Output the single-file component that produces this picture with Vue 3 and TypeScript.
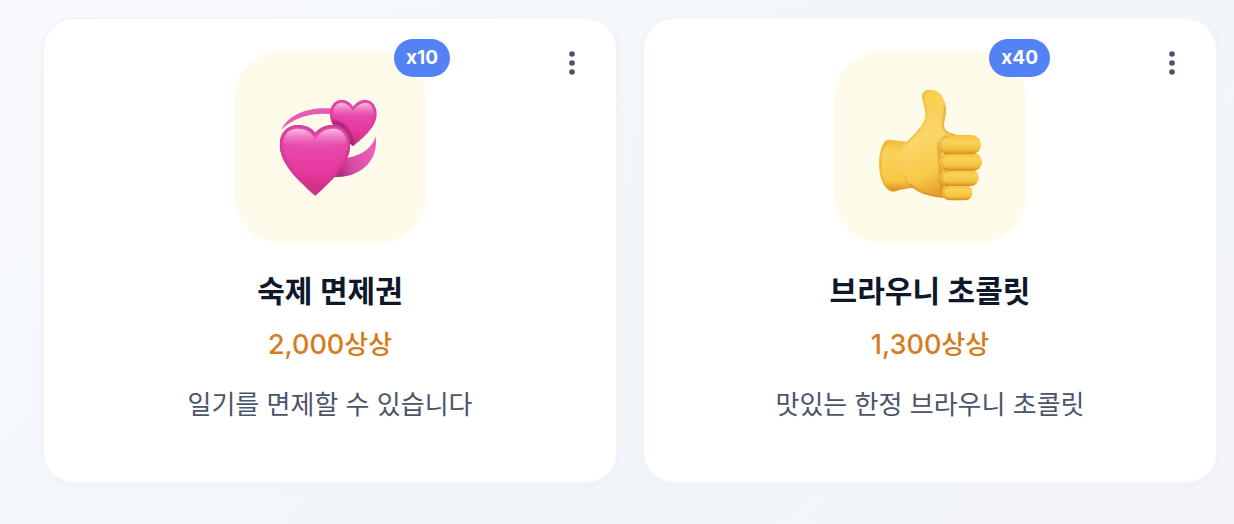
<script setup lang="ts">
interface Reward {
  id: string
  icon: 'hearts' | 'thumb'
  count: number
  title: string
  price: string
  unit: string
  description: string
}

const rewards: Reward[] = [
  {
    id: 'homework-pass',
    icon: 'hearts',
    count: 10,
    title: '숙제 면제권',
    price: '2,000',
    unit: '상상',
    description: '일기를 면제할 수 있습니다',
  },
  {
    id: 'brownie',
    icon: 'thumb',
    count: 40,
    title: '브라우니 초콜릿',
    price: '1,300',
    unit: '상상',
    description: '맛있는 한정 브라우니 초콜릿',
  },
]
</script>

<template>
  <main class="shop">
    <article v-for="reward in rewards" :key="reward.id" class="card">
      <button class="menu" type="button" :aria-label="`${reward.title} 메뉴`">
        <svg width="24" height="24" viewBox="0 0 24 24" aria-hidden="true">
          <circle cx="12" cy="3" r="2.8" />
          <circle cx="12" cy="12" r="2.8" />
          <circle cx="12" cy="21" r="2.8" />
        </svg>
      </button>

      <div class="tile">
        <svg v-if="reward.icon === 'hearts'" width="120" height="116" viewBox="0 -3 360 348" aria-hidden="true">
          <defs>
            <linearGradient id="heart-body" x1="0" y1="0" x2="0" y2="1">
              <stop offset="0" stop-color="#ec61b9" />
              <stop offset="0.3" stop-color="#e748ac" />
              <stop offset="0.65" stop-color="#e8389f" />
              <stop offset="1" stop-color="#c42c79" />
            </linearGradient>
            <linearGradient id="heart-shine" x1="0" y1="0" x2="0" y2="1">
              <stop offset="0" stop-color="#fbc4e4" stop-opacity="0.95" />
              <stop offset="1" stop-color="#ef6bbd" stop-opacity="0" />
            </linearGradient>
            <linearGradient id="ribbon-low" gradientUnits="userSpaceOnUse" x1="200" y1="235" x2="310" y2="190">
              <stop offset="0" stop-color="#a92d78" />
              <stop offset="0.4" stop-color="#db4ba5" />
              <stop offset="1" stop-color="#ea60b8" />
            </linearGradient>
            <filter id="heart-soft" x="-20%" y="-20%" width="140%" height="140%">
              <feGaussianBlur stdDeviation="5" />
            </filter>
            <clipPath id="small-heart-clip">
              <path d="M249 50C239 35 226 30 214 30C195 30 180 48 180 72C180 109 219 144 249 168C280 144 320 109 320 72C320 48 305 30 286 30C272 30 259 38 249 50Z" />
            </clipPath>
            <clipPath id="big-heart-clip">
              <path d="M136 128C122 111 104 105 84 105C53 105 29 128 29 163C29 221 87 275 136 317C184 275 241 221 241 163C241 128 217 105 188 105C167 105 149 113 136 128Z" />
            </clipPath>
          </defs>
          <path d="M33 120C57 71 119 49 190 56L187 73C128 66 75 80 33 120Z" fill="#e65bb3" />
          <path d="M316 138C330 208 270 269 188 260L214 205C263 203 308 178 316 138Z" fill="url(#ribbon-low)" />
          <g clip-path="url(#small-heart-clip)">
            <rect x="178" y="29" width="144" height="142" fill="url(#heart-body)" />
            <path d="M249 50C239 35 226 30 214 30C195 30 180 48 180 72C180 109 219 144 249 168C280 144 320 109 320 72C320 48 305 30 286 30C272 30 259 38 249 50Z" fill="none" stroke="#d93a9c" stroke-width="10" filter="url(#heart-soft)" />
            <path d="M190 72C190 50 201 39 214 39C229 39 241 49 249 64C259 47 272 39 287 39C302 39 311 51 311 72C296 84 204 84 190 72Z" fill="url(#heart-shine)" />
            <path d="M182 98C210 95 236 115 249 170" fill="none" stroke="#a5246f" stroke-width="14" filter="url(#heart-soft)" />
          </g>
          <g clip-path="url(#big-heart-clip)">
            <rect x="28" y="103" width="214" height="217" fill="url(#heart-body)" />
            <path d="M136 128C122 111 104 105 84 105C53 105 29 128 29 163C29 221 87 275 136 317C184 275 241 221 241 163C241 128 217 105 188 105C167 105 149 113 136 128Z" fill="none" stroke="#d0348f" stroke-width="13" filter="url(#heart-soft)" />
            <path d="M40 160C40 130 59 116 83 116C107 116 124 127 136 148C149 127 166 116 189 116C214 116 230 134 230 160C213 178 57 178 40 160Z" fill="url(#heart-shine)" />
          </g>
        </svg>

        <svg v-else width="120" height="130" viewBox="0 4 360 390" aria-hidden="true">
          <defs>
            <linearGradient id="hand-skin" x1="0" y1="0" x2="0.25" y2="1">
              <stop offset="0" stop-color="#f8cd45" />
              <stop offset="0.5" stop-color="#fad568" />
              <stop offset="0.82" stop-color="#f8ca4b" />
              <stop offset="1" stop-color="#e7a22c" />
            </linearGradient>
            <linearGradient id="finger-skin" x1="0" y1="0" x2="0" y2="1">
              <stop offset="0" stop-color="#f5c13a" />
              <stop offset="0.35" stop-color="#fad259" />
              <stop offset="0.75" stop-color="#f5c13b" />
              <stop offset="1" stop-color="#d58b22" />
            </linearGradient>
            <linearGradient id="cuff-skin" x1="0" y1="0" x2="0" y2="1">
              <stop offset="0" stop-color="#f0bd32" />
              <stop offset="0.25" stop-color="#fad25a" />
              <stop offset="0.8" stop-color="#f7c643" />
              <stop offset="1" stop-color="#d78c22" />
            </linearGradient>
            <filter id="hand-soft" x="-20%" y="-20%" width="140%" height="140%">
              <feGaussianBlur stdDeviation="4" />
            </filter>
            <clipPath id="palm-clip">
              <path d="M156 49C155 33 169 27 181 27C206 27 224 48 228 82C230 109 216 131 225 145C233 157 249 158 263 164L283 350C226 355 175 351 138 328C112 312 93 281 94 245C94 215 96 194 111 181C133 161 157 140 165 113C170 91 159 71 156 49Z" />
            </clipPath>
          </defs>
          <path d="M140 180C102 186 76 178 56 177C37 178 27 216 27 248C27 290 40 322 61 331C71 336 80 329 91 327L136 320Z" fill="url(#cuff-skin)" />
          <path d="M55 180C40 188 31 217 31 248C31 286 42 315 62 328" fill="none" stroke="#e7ab2d" stroke-width="5" opacity="0.65" />
          <g clip-path="url(#palm-clip)">
            <rect x="90" y="24" width="200" height="335" fill="url(#hand-skin)" />
            <path d="M228 72C231 112 216 131 225 145C233 157 249 158 270 164" fill="none" stroke="#dfa02d" stroke-width="9" filter="url(#hand-soft)" />
            <path d="M181 26C157 26 152 48 159 65C168 92 168 112 153 136" fill="none" stroke="#edb635" stroke-width="8" filter="url(#hand-soft)" />
            <path d="M118 313C142 340 178 354 230 354" fill="none" stroke="#cf7e20" stroke-width="9" filter="url(#hand-soft)" />
            <path d="M209 184C201 203 212 226 211 244C209 270 217 308 217 346" fill="none" stroke="#d18a27" stroke-width="7" filter="url(#hand-soft)" />
          </g>
          <path d="M103 197C117 179 138 163 152 142" fill="none" stroke="#d6932a" stroke-width="3" opacity="0.65" />
          <path d="M106 286C109 303 116 315 130 322" fill="none" stroke="#cf8822" stroke-width="3" opacity="0.6" />
          <path d="M222 205H309V310H294V330H225Z" fill="#c0731f" />
          <rect x="217" y="312" width="90" height="47" rx="21" fill="url(#finger-skin)" />
          <rect x="212" y="266" width="114" height="50" rx="23" fill="url(#finger-skin)" />
          <rect x="209" y="218" width="127" height="52" rx="25" fill="url(#finger-skin)" />
          <rect x="206" y="163" width="127" height="58" rx="28" fill="url(#finger-skin)" />
          <path d="M234 166C205 169 203 213 231 219M232 222C208 229 209 258 233 266M234 270C212 275 211 305 234 313M235 318C217 321 216 347 235 355" fill="none" stroke="#c77c21" stroke-width="3" opacity="0.5" />
        </svg>
        <span class="badge">x{{ reward.count }}</span>
      </div>

      <h2 class="title">{{ reward.title }}</h2>
      <p class="price">{{ reward.price }}<span class="unit">{{ reward.unit }}</span></p>
      <p class="description">{{ reward.description }}</p>
    </article>
  </main>
</template>

<style>
body {
  margin: 0;
}
</style>

<style scoped>
.shop {
  box-sizing: border-box;
  min-height: 100vh;
  display: grid;
  grid-template-columns: repeat(2, minmax(0, 1fr));
  align-items: start;
  gap: 24px;
  padding: 17px 16px 39px 42px;
  background: linear-gradient(135deg, #f8fafd 0%, #f2f6fa 50%, #f3f5fa 100%);
  font-family: Inter, "Noto Sans CJK KR", sans-serif;
}

.card {
  position: relative;
  display: flex;
  flex-direction: column;
  align-items: center;
  padding: 32px 32px 55px;
  border: 2px solid #f1f5f9;
  border-radius: 32px;
  background: #ffffff;
  background-clip: padding-box;
  box-shadow: 0 2px 6px rgba(15, 23, 42, 0.03);
  text-align: center;
}

.menu {
  position: absolute;
  top: 20px;
  right: 20px;
  display: grid;
  place-items: center;
  width: 48px;
  height: 48px;
  padding: 0;
  border: 0;
  border-radius: 24px;
  background: transparent;
  color: #4b5568;
  cursor: pointer;
}

.menu svg {
  overflow: visible;
  fill: currentColor;
}

.tile {
  position: relative;
  display: grid;
  place-items: center;
  width: 192px;
  height: 192px;
  border-radius: 48px;
  background: #fffbeb;
}

.badge {
  position: absolute;
  top: -12px;
  right: -24px;
  padding: 0 12px;
  border-radius: 19px;
  background: #5282f4;
  color: #ffffff;
  font-size: 19px;
  font-weight: 700;
  line-height: 38px;
}

.title {
  margin: 24px 0 0;
  color: #0f172a;
  font-size: 30px;
  font-weight: 600;
  line-height: 48px;
}

.price {
  margin: 8px 0 0;
  color: #d57b20;
  font-size: 27px;
  font-weight: 500;
  line-height: 44px;
}

.unit {
  font-size: 26px;
}

.description {
  margin: 16px 0 0;
  color: #4b5568;
  font-size: 26px;
  line-height: 44px;
}
</style>
